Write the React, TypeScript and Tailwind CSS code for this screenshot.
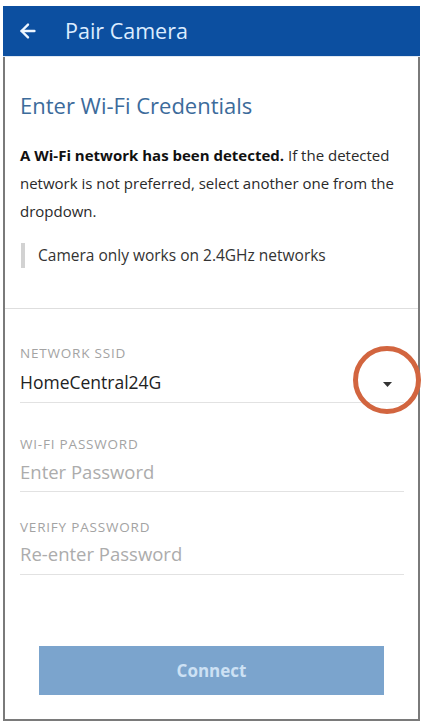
import { ArrowLeft } from "lucide-react"

interface FieldProps {
  label: string
  value: string
  placeholder?: boolean
  labelTop: string
  gap: string
  pad: string
  children?: React.ReactNode
}

function Field({ label, value, placeholder, labelTop, gap, pad, children }: FieldProps) {
  return (
    <div className={`relative ${labelTop}`}>
      <div className="text-[13.5px] leading-[16px] text-[#a3a3a3] tracking-[0.8px]">{label}</div>
      <div
        className={`${gap} ${pad} border-b border-[#e2e2e2] leading-[24px] ${
          placeholder ? "text-[18.5px] text-[#acacac]" : "text-[17.5px] text-[#222]"
        }`}
      >
        {value}
      </div>
      {children}
    </div>
  )
}

export default function App() {
  return (
    <div
      className="w-[423px] h-[723px] bg-white pt-[6px] px-[3px] pb-[2px] overflow-hidden"
      style={{ fontFamily: '"Open Sans", "Liberation Sans", sans-serif' }}
    >
      <div className="h-full flex flex-col border-x-2 border-b-2 border-[#7a7a7a]">
        <header className="h-[50px] -mx-[2px] bg-[#0c4fa0] flex items-center pl-[14px] shadow-[0_1px_0_#dfe8f2]">
          <ArrowLeft className="w-[22px] h-[22px] text-[#eef6ff]" strokeWidth={2.6} />
          <h1 className="ml-[26px] text-[21.5px] text-[#dcecff]">Pair Camera</h1>
        </header>

        <section className="px-[15px] pb-[40px] border-b border-[#dedede]">
          <h2 className="mt-[35px] text-[22px] leading-[28px] text-[#3c6b9b]">Enter Wi-Fi Credentials</h2>
          <p className="mt-[22px] text-[15px] leading-[28px] text-[#2a2a2a]">
            <span className="font-bold text-[#111]">A Wi-Fi network has been detected.</span> If the detected
            network is not preferred, select another one from the dropdown.
          </p>
          <div className="mt-[18px] h-[25px] flex items-center">
            <div className="w-[4px] h-full bg-[#d2d2d2] mr-[13px] ml-[1px]" />
            <span className="text-[15.5px] text-[#333]">Camera only works on 2.4GHz networks</span>
          </div>
        </section>

        <section className="pl-[15px] pr-[14px] flex flex-col">
          <Field label="NETWORK SSID" value="HomeCentral24G" labelTop="mt-[36px]" gap="mt-[9px]" pad="pb-[8px]">
            <svg className="absolute right-[12px] top-[37px]" width="9" height="5" viewBox="0 0 9 5">
              <path d="M0 0h9L4.5 5z" fill="#333" />
            </svg>
            <div className="absolute right-[-17px] top-[1px] w-[68px] h-[68px] rounded-full border-[5px] border-[#d2653f]" />
          </Field>
          <Field label="WI-FI PASSWORD" value="Enter Password" placeholder labelTop="mt-[33px]" gap="mt-[8px]" pad="pb-[7px]" />
          <Field label="VERIFY PASSWORD" value="Re-enter Password" placeholder labelTop="mt-[27px]" gap="mt-[7px]" pad="pb-[8px]" />
        </section>

        <button className="mt-[71px] ml-[34px] w-[345px] h-[49px] bg-[#7ba4cd] text-[#cde1f4] text-[17px] font-bold">
          Connect
        </button>
      </div>
    </div>
  )
}
